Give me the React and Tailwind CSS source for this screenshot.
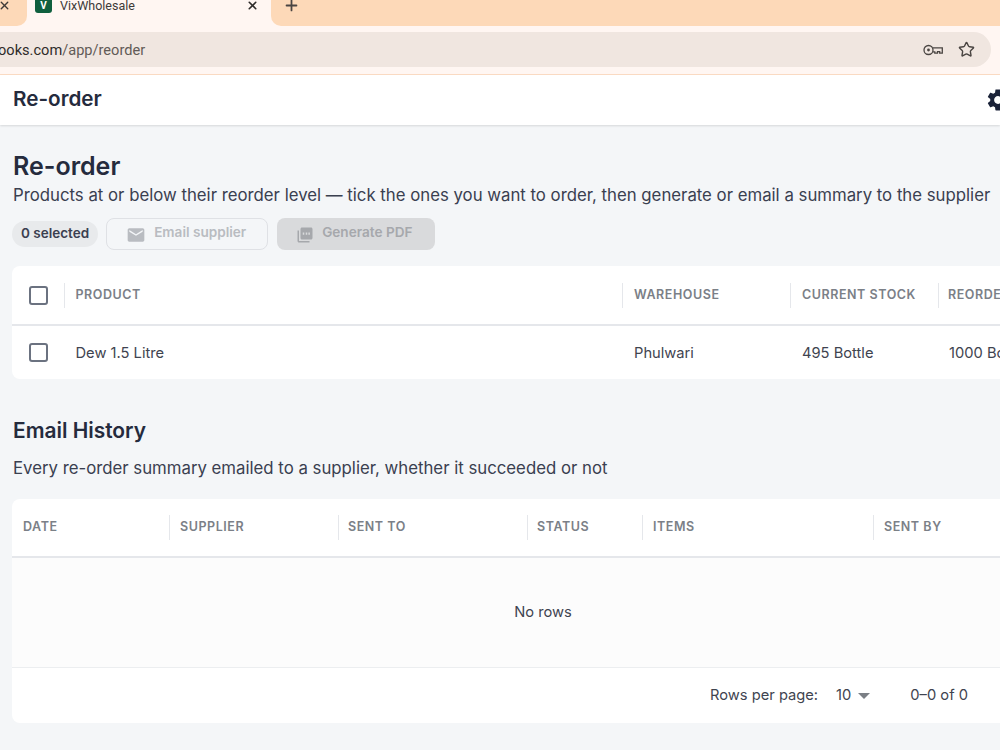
import React from "react";
import { X, Plus, Star } from "lucide-react";

const ff = { fontFamily: "Inter, sans-serif" };

function Th({ w, children, pl = "pl-[10px]", sep = true, lift = "" }) {
  return (
    <div className={`${w} shrink-0 h-full flex items-center`}>
      {sep && <div className="w-px h-[25px] bg-[#e5e7eb] shrink-0" />}
      <span className={`${pl} ${lift} text-[12.5px] font-semibold tracking-[0.55px] text-[#7b8087] whitespace-nowrap`}>{children}</span>
    </div>
  );
}

function Td({ w, children }) {
  return <div className={`${w} shrink-0 pl-[12px] pt-px text-[14.7px] text-[#3f4450] whitespace-nowrap`}>{children}</div>;
}

function Box() {
  return <div className="w-[19px] h-[19px] border-2 border-[#6b7280] rounded-[3px]" />;
}

export default function App() {
  return (
    <div className="w-[1000px] h-[750px] overflow-hidden bg-[#f4f6f8] flex flex-col" style={ff}>
      <div className="h-[26px] bg-[#fff6f2] flex shrink-0 overflow-hidden" style={{ fontFamily: "Roboto, sans-serif" }}>
        <div className="w-[27px] bg-[#fdd9b8] rounded-br-[10px] flex items-start justify-start">
          <X size={13} strokeWidth={2.5} className="text-[#3f3a36] -mt-[1px] -ml-[2px]" />
        </div>
        <div className="w-[244px] flex items-start pl-[8px] pr-[12px]">
          <div className="w-[17px] h-[13px] bg-[#0f5f3e] rounded-b-[3px] flex items-start justify-center text-white text-[10px] font-bold leading-[11px]">V</div>
          <span className="ml-[8px] text-[12.5px] leading-[11px] text-[#3d3a38]">VixWholesale</span>
          <X size={13} strokeWidth={3} className="ml-auto text-[#2f2c2a] -mt-[1px]" />
        </div>
        <div className="flex-1 bg-[#fdd9b8] rounded-bl-[10px] flex items-start pl-[12px]">
          <Plus size={17} strokeWidth={2.5} className="text-[#4a4542] -mt-[3px]" />
        </div>
      </div>

      <div className="h-[49px] bg-[#fff6f2] border-b border-[#fcdcc4] shrink-0 pt-[6px] pr-[9px]">
        <div className="h-[35px] bg-[#f0e6e0] rounded-r-[18px] flex items-center justify-between pr-[16px]" style={{ fontFamily: "Roboto, sans-serif" }}>
          <div className="text-[14.6px] -ml-[2px] mt-[2px] whitespace-nowrap">
            <span className="text-[#2f2c2a]">ooks.com</span>
            <span className="text-[#625b57]">/app/reorder</span>
          </div>
          <div className="flex items-center gap-[15px] text-[#4a4542]">
            <svg width="20" height="12" viewBox="0 0 20 12" fill="none" stroke="currentColor" strokeWidth="1.3">
              <circle cx="5.500" cy="6" r="4.500" />
              <circle cx="5.500" cy="6" r="1.400" fill="currentColor" stroke="none" />
              <path d="M10 3.800h9.300v5.400h-2.600V7.600h-2.200v1.600h-2.700V7.800H10" />
            </svg>
            <Star size={17} strokeWidth={2} />
          </div>
        </div>
      </div>

      <div className="h-[50px] bg-white shrink-0 flex items-center justify-between pl-[13px] shadow-[0_1px_2px_rgba(0,0,0,0.12)] overflow-hidden">
        <span className="text-[20.7px] font-semibold text-[#252b3d] -mt-[2px]">Re-order</span>
        <svg width="26" height="26" viewBox="0 0 24 24" fill="#1a2238" className="-mr-[11px] shrink-0">
          <path d="M19.140 12.940c.040-.300.060-.610.060-.940 0-.320-.020-.640-.070-.940l2.030-1.580c.180-.140.230-.410.120-.610l-1.920-3.320c-.120-.220-.370-.290-.590-.220l-2.390.960c-.500-.380-1.030-.700-1.620-.940l-.360-2.540c-.040-.240-.240-.410-.480-.410h-3.840c-.240 0-.430.170-.470.410l-.360 2.540c-.590.240-1.130.570-1.620.940l-2.390-.960c-.220-.080-.470 0-.590.220L2.740 8.870c-.120.210-.080.470.120.610l2.030 1.580c-.050.300-.090.630-.090.940s.020.640.070.940l-2.030 1.580c-.180.140-.230.410-.120.610l1.920 3.320c.120.220.370.290.590.220l2.390-.960c.500.380 1.030.700 1.620.940l.360 2.540c.050.240.240.410.480.410h3.840c.240 0 .440-.170.470-.410l.360-2.540c.590-.240 1.130-.560 1.620-.940l2.390.960c.220.080.470 0 .590-.220l1.920-3.320c.120-.220.070-.470-.120-.610l-2.010-1.580zM12 15.600c-1.980 0-3.600-1.620-3.600-3.600s1.620-3.600 3.600-3.600 3.600 1.620 3.600 3.600-1.620 3.600-3.600 3.600z" />
        </svg>
      </div>

      <main className="flex-1 pl-[12px] pt-[26px] w-[1060px]">
        <h1 className="text-[25px] leading-[30px] font-semibold text-[#252b3d] ml-[1px]">Re-order</h1>
        <p className="text-[16.77px] leading-[24px] text-[#3a4050] ml-[1px] mt-[2px] whitespace-nowrap">
          Products at or below their reorder level — tick the ones you want to order, then generate or email a summary to the supplier
        </p>

        <div className="flex items-center mt-[11px] h-[32px]">
          <span className="h-[26px] px-[9px] rounded-full bg-[#e8eaec] text-[13.5px] font-semibold text-[#3b4050] flex items-center -mt-[1px] pb-px">0 selected</span>
          <button className="ml-[8px] w-[162px] h-[32px] rounded-[8px] border border-[#dfe1e5] flex items-center pl-[19px] text-[13.6px] font-semibold text-[#b9bcc1]">
            <svg width="20" height="20" viewBox="0 0 24 24" fill="#b9bcc1" className="mr-[8px] mt-[2px]">
              <path d="M20 4H4c-1.100 0-1.990.9-1.990 2L2 18c0 1.100.9 2 2 2h16c1.100 0 2-.9 2-2V6c0-1.100-.9-2-2-2zm0 4-8 5-8-5V6l8 5 8-5v2z" />
            </svg>
            <span className="-mt-[3px]">Email supplier</span>
          </button>
          <button className="ml-[9px] w-[158px] h-[32px] rounded-[8px] bg-[#d9dadc] flex items-center pl-[19px] text-[13.6px] font-semibold text-[#a6a8ac]">
            <svg width="18" height="18" viewBox="0 0 24 24" fill="#a6a8ac" className="mr-[8px] mt-[2px]">
              <path d="M20 2H8c-1.100 0-2 .9-2 2v12c0 1.100.9 2 2 2h12c1.100 0 2-.9 2-2V4c0-1.100-.9-2-2-2zM4 6H2v14c0 1.100.9 2 2 2h14v-2H4V6z" />
              <path d="M9 8.500h2v3H9zM13 8.500h2v3h-2zM16.500 8.500h2v3h-2z" fill="#d9dadc" />
            </svg>
            <span className="-mt-[3px]">Generate PDF</span>
          </button>
        </div>

        <section className="mt-[16px] bg-white rounded-[8px]">
          <div className="h-[60px] flex items-center border-b-2 border-[#e5e7eb]">
            <div className="w-[52px] shrink-0 pl-[17px]"><Box /></div>
            <Th w="w-[558px]" pl="pl-[10.500px]">PRODUCT</Th>
            <Th w="w-[168px]" pl="pl-[11px]">WAREHOUSE</Th>
            <Th w="w-[148px]" pl="pl-[11px]">CURRENT STOCK</Th>
            <Th w="w-[120px]" pl="pl-[9px]">REORDER LEVEL</Th>
          </div>
          <div className="h-[53px] flex items-center">
            <div className="w-[52px] shrink-0 pl-[17px]"><Box /></div>
            <div className="w-[558px] shrink-0 pl-[11.500px] pt-px text-[14.7px] text-[#3f4450]">Dew 1.5 Litre</div>
            <Td w="w-[168px]">Phulwari</Td>
            <Td w="w-[147px]">495 Bottle</Td>
            <Td w="w-[120px]">1000 Bottle</Td>
          </div>
        </section>

        <h2 className="mt-[39px] text-[20.900px] leading-[26px] font-semibold text-[#252b3d] ml-[1px]">Email History</h2>
        <p className="mt-[11px] pt-px text-[16.77px] leading-[24px] text-[#3a4050] ml-[1px]">Every re-order summary emailed to a supplier, whether it succeeded or not</p>

        <section className="mt-[19px] bg-white rounded-[8px]">
          <div className="h-[59px] flex items-center border-b-2 border-[#e5e7eb]">
            <Th w="w-[157px]" pl="pl-[11px]" lift="-mt-[1px]" sep={false}>DATE</Th>
            <Th w="w-[169px]" lift="-mt-[1px]">SUPPLIER</Th>
            <Th w="w-[189px]" pl="pl-[9px]" lift="-mt-[1px]">SENT TO</Th>
            <Th w="w-[115px]" pl="pl-[9px]" lift="-mt-[1px]">STATUS</Th>
            <Th w="w-[231px]" lift="-mt-[1px]">ITEMS</Th>
            <Th w="w-[120px]" lift="-mt-[1px]">SENT BY</Th>
          </div>
          <div className="h-[110px] bg-[#fcfcfc] flex items-center justify-center border-b border-[#eceef0] w-[1062px]">
            <span className="text-[14.7px] text-[#3f4450]">No rows</span>
          </div>
          <div className="h-[55px] flex items-center pl-[698px] text-[14.7px] text-[#3f4450]">
            <span>Rows per page:</span>
            <span className="ml-[18px] -mt-[1px]">10</span>
            <svg width="12" height="6" viewBox="0 0 12 6" className="ml-[7px] mt-[1px]"><path d="M0 0h12L6 6z" fill="#7b7f85" /></svg>
            <span className="ml-[40px]">0–0 of 0</span>
          </div>
        </section>
      </main>
    </div>
  );
}
